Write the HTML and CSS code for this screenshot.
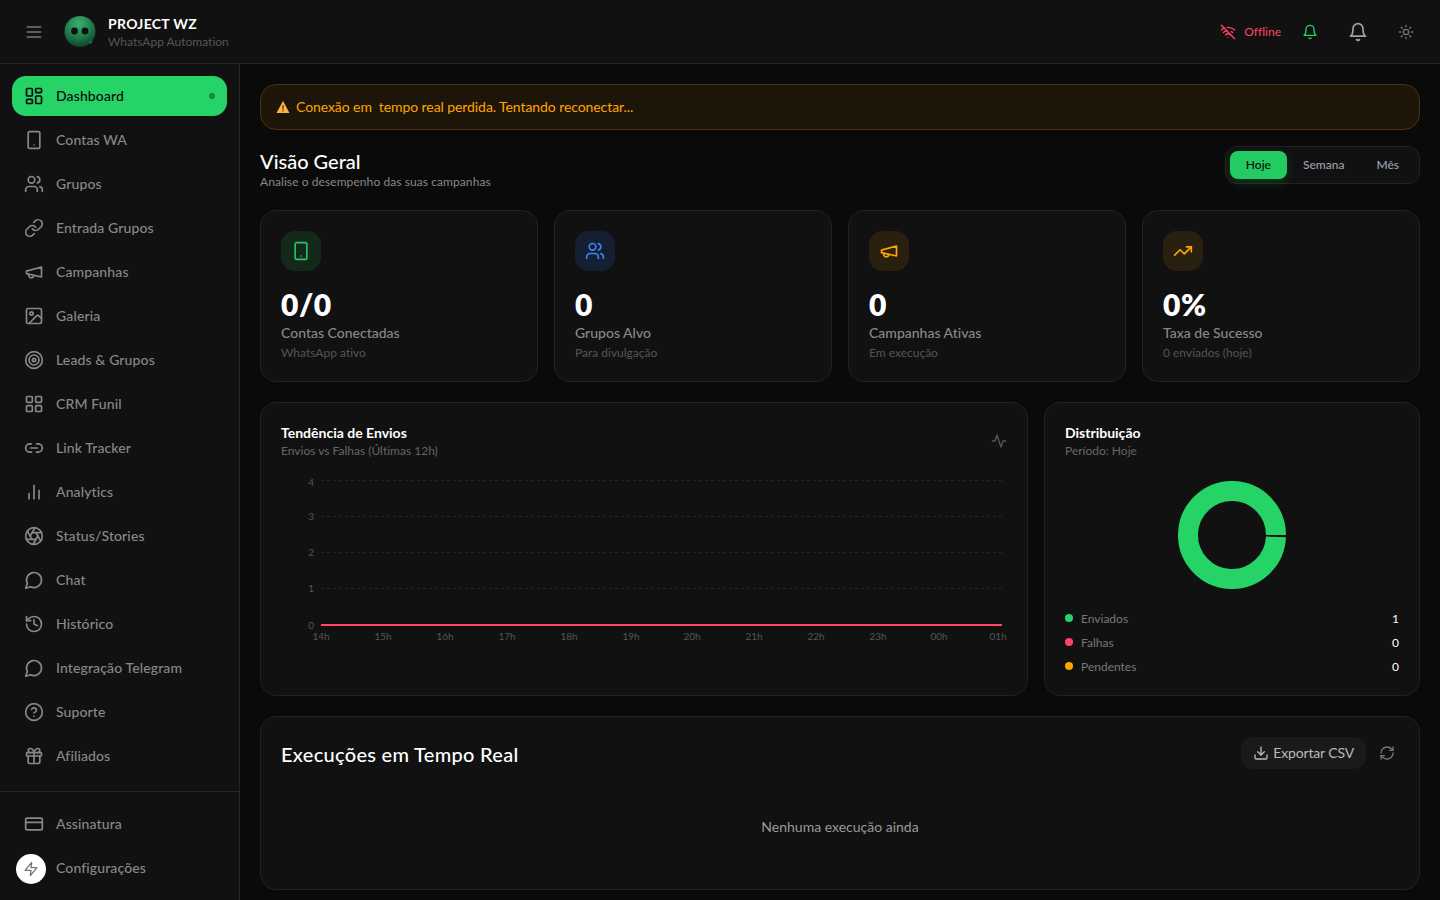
FILE: index.html
```html
<!DOCTYPE html>
<html lang="pt-BR">
<head>
  <meta charset="UTF-8" />
  <meta name="viewport" content="width=device-width, initial-scale=1.0"/>
  <title>Project WZ - Dashboard</title>
  <link rel="stylesheet" href="styles.css">
</head>
<body>

<svg class="sprite" xmlns="http://www.w3.org/2000/svg">
  <symbol id="i-menu" viewBox="0 0 24 24"><path d="M4 6h16M4 12h16M4 18h16"/></symbol>
  <symbol id="i-dashboard" viewBox="0 0 24 24"><rect x="3" y="3" width="7" height="9" rx="1"/><rect x="14" y="3" width="7" height="5" rx="1"/><rect x="14" y="12" width="7" height="9" rx="1"/><rect x="3" y="16" width="7" height="5" rx="1"/></symbol>
  <symbol id="i-phone" viewBox="0 0 24 24"><rect x="5" y="2" width="14" height="20" rx="2"/><path d="M12 18h.01"/></symbol>
  <symbol id="i-users" viewBox="0 0 24 24"><path d="M16 21v-2a4 4 0 0 0-4-4H6a4 4 0 0 0-4 4v2"/><circle cx="9" cy="7" r="4"/><path d="M22 21v-2a4 4 0 0 0-3-3.87"/><path d="M16 3.13a4 4 0 0 1 0 7.75"/></symbol>
  <symbol id="i-link" viewBox="0 0 24 24"><path d="M10 13a5 5 0 0 0 7.54.54l3-3a5 5 0 0 0-7.07-7.07l-1.72 1.71"/><path d="M14 11a5 5 0 0 0-7.54-.54l-3 3a5 5 0 0 0 7.07 7.07l1.71-1.71"/></symbol>
  <symbol id="i-megaphone" viewBox="0 0 24 24"><path d="m3 11 18-5v12L3 14v-3z"/><path d="M11.6 16.8a3 3 0 1 1-5.8-1.6"/></symbol>
  <symbol id="i-image" viewBox="0 0 24 24"><rect x="3" y="3" width="18" height="18" rx="2"/><circle cx="9" cy="9" r="2"/><path d="m21 15-3.086-3.086a2 2 0 0 0-2.828 0L6 21"/></symbol>
  <symbol id="i-target" viewBox="0 0 24 24"><circle cx="12" cy="12" r="10"/><circle cx="12" cy="12" r="6"/><circle cx="12" cy="12" r="2"/></symbol>
  <symbol id="i-grid" viewBox="0 0 24 24"><rect x="3" y="3" width="7" height="7" rx="1"/><rect x="14" y="3" width="7" height="7" rx="1"/><rect x="14" y="14" width="7" height="7" rx="1"/><rect x="3" y="14" width="7" height="7" rx="1"/></symbol>
  <symbol id="i-link2" viewBox="0 0 24 24"><path d="M9 17H7A5 5 0 0 1 7 7h2"/><path d="M15 7h2a5 5 0 1 1 0 10h-2"/><path d="M8 12h8"/></symbol>
  <symbol id="i-bars" viewBox="0 0 24 24"><path d="M18 20V10M12 20V4M6 20v-6"/></symbol>
  <symbol id="i-aperture" viewBox="0 0 24 24"><circle cx="12" cy="12" r="10"/><path d="m14.31 8 5.74 9.94"/><path d="M9.69 8h11.48"/><path d="m7.38 12 5.74-9.94"/><path d="M9.69 16 3.95 6.06"/><path d="M14.31 16H2.83"/><path d="m16.62 12-5.74 9.94"/></symbol>
  <symbol id="i-message" viewBox="0 0 24 24"><path d="M7.9 20A9 9 0 1 0 4 16.1L2 22Z"/></symbol>
  <symbol id="i-history" viewBox="0 0 24 24"><path d="M3 12a9 9 0 1 0 9-9 9.75 9.75 0 0 0-6.74 2.74L3 8"/><path d="M3 3v5h5"/><path d="M12 7v5l4 2"/></symbol>
  <symbol id="i-help" viewBox="0 0 24 24"><circle cx="12" cy="12" r="10"/><path d="M9.09 9a3 3 0 0 1 5.83 1c0 2-3 3-3 3"/><path d="M12 17h.01"/></symbol>
  <symbol id="i-gift" viewBox="0 0 24 24"><rect x="3" y="8" width="18" height="4" rx="1"/><path d="M12 8v13"/><path d="M19 12v7a2 2 0 0 1-2 2H7a2 2 0 0 1-2-2v-7"/><path d="M7.5 8a2.5 2.5 0 0 1 0-5A4.8 8 0 0 1 12 8a4.8 8 0 0 1 4.5-5 2.5 2.5 0 0 1 0 5"/></symbol>
  <symbol id="i-card" viewBox="0 0 24 24"><rect x="2" y="5" width="20" height="14" rx="2"/><path d="M2 10h20"/></symbol>
  <symbol id="i-zap" viewBox="0 0 24 24"><path d="M13 2 3 14h9l-1 8 10-12h-9l1-8z"/></symbol>
  <symbol id="i-wifi-off" viewBox="0 0 24 24"><path d="M12 20h.01"/><path d="M8.5 16.429a5 5 0 0 1 7 0"/><path d="M5 12.859a10 10 0 0 1 5.17-2.69"/><path d="M19 12.859a10 10 0 0 0-2.007-1.523"/><path d="M2 8.82a15 15 0 0 1 4.177-2.643"/><path d="M22 8.82a15 15 0 0 0-11.288-3.764"/><path d="m2 2 20 20"/></symbol>
  <symbol id="i-bell" viewBox="0 0 24 24"><path d="M6 8a6 6 0 0 1 12 0c0 7 3 9 3 9H3s3-2 3-9"/><path d="M10.3 21a1.94 1.94 0 0 0 3.4 0"/></symbol>
  <symbol id="i-sun" viewBox="0 0 24 24"><circle cx="12" cy="12" r="4"/><path d="M12 2v2M12 20v2M4.93 4.93l1.41 1.41M17.66 17.66l1.41 1.41M2 12h2M20 12h2M6.34 17.66l-1.41 1.41M19.07 4.93l-1.41 1.41"/></symbol>
  <symbol id="i-trending" viewBox="0 0 24 24"><path d="M22 7l-8.5 8.5-5-5L2 17"/><path d="M16 7h6v6"/></symbol>
  <symbol id="i-activity" viewBox="0 0 24 24"><path d="M22 12h-4l-3 9L9 3l-3 9H2"/></symbol>
  <symbol id="i-download" viewBox="0 0 24 24"><path d="M21 15v4a2 2 0 0 1-2 2H5a2 2 0 0 1-2-2v-4"/><path d="m7 10 5 5 5-5"/><path d="M12 15V3"/></symbol>
  <symbol id="i-refresh" viewBox="0 0 24 24"><path d="M3 12a9 9 0 0 1 9-9 9.75 9.75 0 0 1 6.74 2.74L21 8"/><path d="M21 3v5h-5"/><path d="M21 12a9 9 0 0 1-9 9 9.75 9.75 0 0 1-6.74-2.74L3 16"/><path d="M8 16H3v5"/></symbol>
</svg>

<header class="topbar">
  <div class="brand">
    <svg class="icon menu-icon"><use href="#i-menu"/></svg>
    <svg class="logo" viewBox="0 0 32 32">
      <defs>
        <radialGradient id="logoFill" cx="45%" cy="25%" r="80%">
          <stop offset="0" stop-color="#3fae74"/>
          <stop offset="0.55" stop-color="#1f7a4c"/>
          <stop offset="1" stop-color="#0e3d27"/>
        </radialGradient>
      </defs>
      <circle cx="16" cy="15.5" r="15.5" fill="url(#logoFill)"/>
      <path d="M24 26l4.500-1.500-1 3.500z" fill="#1c6d45"/>
      <circle cx="10.500" cy="15" r="3.400" fill="#0b1410"/>
      <circle cx="21" cy="15" r="3.400" fill="#0b1410"/>
    </svg>
    <div class="brand-text">
      <strong>PROJECT WZ</strong>
      <span>WhatsApp Automation</span>
    </div>
  </div>
  <div class="top-actions">
    <div class="conn-status">
      <svg class="icon icon-16"><use href="#i-wifi-off"/></svg>
      <span>Offline</span>
    </div>
    <svg class="icon icon-16 bell-green"><use href="#i-bell"/></svg>
    <svg class="icon bell-grey"><use href="#i-bell"/></svg>
    <svg class="icon icon-16 sun"><use href="#i-sun"/></svg>
  </div>
</header>

<div class="layout">
  <aside class="sidebar">
    <nav class="nav-main">
      <a class="nav-item active" href="#"><svg class="icon"><use href="#i-dashboard"/></svg>Dashboard<span class="active-dot"></span></a>
      <a class="nav-item" href="#"><svg class="icon"><use href="#i-phone"/></svg>Contas WA</a>
      <a class="nav-item" href="#"><svg class="icon"><use href="#i-users"/></svg>Grupos</a>
      <a class="nav-item" href="#"><svg class="icon"><use href="#i-link"/></svg>Entrada Grupos</a>
      <a class="nav-item" href="#"><svg class="icon"><use href="#i-megaphone"/></svg>Campanhas</a>
      <a class="nav-item" href="#"><svg class="icon"><use href="#i-image"/></svg>Galeria</a>
      <a class="nav-item" href="#"><svg class="icon"><use href="#i-target"/></svg>Leads &amp; Grupos</a>
      <a class="nav-item" href="#"><svg class="icon"><use href="#i-grid"/></svg>CRM Funil</a>
      <a class="nav-item" href="#"><svg class="icon"><use href="#i-link2"/></svg>Link Tracker</a>
      <a class="nav-item" href="#"><svg class="icon"><use href="#i-bars"/></svg>Analytics</a>
      <a class="nav-item" href="#"><svg class="icon"><use href="#i-aperture"/></svg>Status/Stories</a>
      <a class="nav-item" href="#"><svg class="icon"><use href="#i-message"/></svg>Chat</a>
      <a class="nav-item" href="#"><svg class="icon"><use href="#i-history"/></svg>Histórico</a>
      <a class="nav-item" href="#"><svg class="icon"><use href="#i-message"/></svg>Integração Telegram</a>
      <a class="nav-item" href="#"><svg class="icon"><use href="#i-help"/></svg>Suporte</a>
      <a class="nav-item" href="#"><svg class="icon"><use href="#i-gift"/></svg>Afiliados</a>
    </nav>
    <nav class="nav-bottom">
      <a class="nav-item" href="#"><svg class="icon"><use href="#i-card"/></svg>Assinatura</a>
      <a class="nav-item" href="#"><span class="icon"></span>Configurações</a>
    </nav>
  </aside>

  <main class="content">
    <div class="alert">
      <svg class="alert-icon" viewBox="0 0 14 14">
        <path d="M7 1 13.500 13H.5z" fill="#ffb347"/>
        <path d="M6.400 5h1.200v4.500H6.400zM6.400 10.300h1.200v1.200H6.400z" fill="#4a2f08"/>
      </svg>
      <span>Conexão em&nbsp; tempo real perdida. Tentando reconectar...</span>
    </div>

    <div class="section-head">
      <div>
        <h2>Visão Geral</h2>
        <p>Analise o desempenho das suas campanhas</p>
      </div>
      <div class="period">
        <button class="selected">Hoje</button>
        <button>Semana</button>
        <button>Mês</button>
      </div>
    </div>

    <section class="stats">
      <div class="panel stat">
        <div class="stat-icon green"><svg class="icon"><use href="#i-phone"/></svg></div>
        <div class="stat-value">0/0</div>
        <div class="stat-label">Contas Conectadas</div>
        <div class="stat-note">WhatsApp ativo</div>
      </div>
      <div class="panel stat">
        <div class="stat-icon blue"><svg class="icon"><use href="#i-users"/></svg></div>
        <div class="stat-value">0</div>
        <div class="stat-label">Grupos Alvo</div>
        <div class="stat-note">Para divulgação</div>
      </div>
      <div class="panel stat">
        <div class="stat-icon amber"><svg class="icon"><use href="#i-megaphone"/></svg></div>
        <div class="stat-value">0</div>
        <div class="stat-label">Campanhas Ativas</div>
        <div class="stat-note">Em execução</div>
      </div>
      <div class="panel stat">
        <div class="stat-icon amber"><svg class="icon"><use href="#i-trending"/></svg></div>
        <div class="stat-value">0%</div>
        <div class="stat-label">Taxa de Sucesso</div>
        <div class="stat-note">0 enviados (hoje)</div>
      </div>
    </section>

    <section class="charts">
      <div class="panel chart-card">
        <div class="chart-head">
          <div>
            <h3>Tendência de Envios</h3>
            <p>Envios vs Falhas (Últimas 12h)</p>
          </div>
          <svg class="icon icon-16 activity"><use href="#i-activity"/></svg>
        </div>
        <svg class="trend" viewBox="0 0 726 170" width="726" height="170">
          <g class="grid-lines">
            <path d="M40 .5H721M40 36.500H721M40 72.500H721M40 108.500H721"/>
          </g>
          <g class="axis-y">
            <text x="33" y="6">4</text>
            <text x="33" y="40">3</text>
            <text x="33" y="76">2</text>
            <text x="33" y="112">1</text>
            <text x="33" y="149">0</text>
          </g>
          <path class="line-fail" d="M40 145H721"/>
          <g class="axis-x">
            <text x="40" y="160">14h</text>
            <text x="102" y="160">15h</text>
            <text x="164" y="160">16h</text>
            <text x="226" y="160">17h</text>
            <text x="288" y="160">18h</text>
            <text x="350" y="160">19h</text>
            <text x="411" y="160">20h</text>
            <text x="473" y="160">21h</text>
            <text x="535" y="160">22h</text>
            <text x="597" y="160">23h</text>
            <text x="658" y="160">00h</text>
            <text x="717" y="160">01h</text>
          </g>
        </svg>
      </div>

      <div class="panel chart-card">
        <h3>Distribuição</h3>
        <p>Período: Hoje</p>
        <div class="donut-wrap">
          <svg class="donut" viewBox="0 0 108 108" width="108" height="108">
            <circle class="donut-ring" cx="54" cy="54" r="44" pathLength="360"/>
          </svg>
        </div>
        <ul class="legend">
          <li><span class="dot dot-green"></span>Enviados<b>1</b></li>
          <li><span class="dot dot-red"></span>Falhas<b>0</b></li>
          <li><span class="dot dot-amber"></span>Pendentes<b>0</b></li>
        </ul>
      </div>
    </section>

    <section class="panel runs">
      <div class="runs-head">
        <h2>Execuções em Tempo Real</h2>
        <div class="runs-actions">
          <button class="export"><svg class="icon icon-16"><use href="#i-download"/></svg><span>Exportar CSV</span></button>
          <svg class="icon icon-16 refresh"><use href="#i-refresh"/></svg>
        </div>
      </div>
      <p class="empty">Nenhuma execução ainda</p>
    </section>
  </main>
</div>

<div class="fab"><svg class="icon icon-16"><use href="#i-zap"/></svg></div>

</body>
</html>
```

FILE: styles.css
```css
* {
  box-sizing: border-box;
}
body {
  font-family: 'Lato', sans-serif;
  text-rendering: optimizeSpeed;
  margin: 0;
  height: 100vh;
  overflow: hidden;
  background: #0a0a0a;
  color: #fff;
}
h2, h3, p, ul {
  margin: 0;
  padding: 0;
}
.sprite {
  display: none;
}
.icon {
  width: 20px;
  height: 20px;
  flex: none;
  fill: none;
  stroke: currentColor;
  stroke-width: 2;
  stroke-linecap: round;
  stroke-linejoin: round;
}
.icon-16 {
  width: 16px;
  height: 16px;
}

/* top bar */
.topbar {
  height: 64px;
  background: #111;
  border-bottom: 1px solid #262626;
  display: flex;
  align-items: center;
  justify-content: space-between;
  padding: 0 26px 0 24px;
}
.brand {
  display: flex;
  align-items: center;
}
.menu-icon {
  color: #777;
  margin-right: 20px;
}
.logo {
  width: 32px;
  height: 32px;
  margin-right: 12px;
}
.brand-text {
  padding-top: 2px;
}
.brand-text strong {
  display: block;
  font-size: 14px;
  line-height: 18px;
  font-weight: 700;
  letter-spacing: .3px;
}
.brand-text span {
  display: block;
  font-size: 12px;
  line-height: 18px;
  color: #555;
}
.top-actions {
  display: flex;
  align-items: center;
}
.conn-status {
  display: flex;
  align-items: center;
  gap: 8px;
  font-size: 12px;
  color: #ff4466;
}
.bell-green {
  color: #25d366;
  margin-left: 21px;
}
.bell-grey {
  color: #9ca3af;
  margin-left: 30px;
}
.sun {
  color: #777;
  margin-left: 30px;
}

/* sidebar */
.layout {
  display: flex;
  height: 836px;
}
.sidebar {
  width: 240px;
  flex: none;
  background: #111;
  border-right: 1px solid #262626;
  display: flex;
  flex-direction: column;
  justify-content: space-between;
}
.nav-main, .nav-bottom {
  display: flex;
  flex-direction: column;
  gap: 4px;
  padding: 12px;
}
.nav-bottom {
  border-top: 1px solid #262626;
}
.nav-item {
  height: 40px;
  display: flex;
  align-items: center;
  gap: 12px;
  padding: 0 12px;
  border-radius: 14px;
  color: #888;
  font-size: 14px;
  font-weight: 500;
  line-height: 18px;
  letter-spacing: .12px;
  text-decoration: none;
}
.nav-item.active {
  background: #25d366;
  color: #0a0a0a;
}
.active-dot {
  width: 6px;
  height: 6px;
  border-radius: 50%;
  background: #128a44;
  margin-left: auto;
}
.fab {
  position: fixed;
  left: 16px;
  top: 854px;
  width: 30px;
  height: 30px;
  border-radius: 50%;
  background: #fff;
  color: #777;
  display: flex;
  align-items: center;
  justify-content: center;
}

/* main */
.content {
  flex: 1;
  padding: 20px;
  min-width: 0;
}
.panel {
  background: #111;
  border: 1px solid #222;
  border-radius: 16px;
}
.alert {
  height: 46px;
  display: flex;
  align-items: center;
  gap: 6px;
  padding: 0 15px;
  background: #1e1509;
  border: 1px solid #4a3410;
  border-radius: 16px;
  color: #ffa500;
  font-size: 14px;
  letter-spacing: -.08px;
}
.alert span {
  padding-bottom: 2px;
}
.alert-icon {
  width: 14px;
  height: 14px;
}
.section-head {
  display: flex;
  justify-content: space-between;
  align-items: flex-start;
  margin: 16px 0 20px;
  height: 44px;
}
.section-head h2 {
  font-size: 20px;
  line-height: 30px;
  font-weight: 500;
}
.section-head p {
  font-size: 12px;
  line-height: 12px;
  letter-spacing: .08px;
  color: #888;
}
.period {
  display: flex;
  padding: 4px;
  background: #111;
  border: 1px solid #222;
  border-radius: 12px;
}
.period button {
  height: 28px;
  padding: 0 16px 2px;
  border: none;
  border-radius: 8px;
  background: none;
  color: #9ca3af;
  font: 500 12px 'Lato', sans-serif;
}
.period .selected {
  background: #22cc62;
  color: #0a0a0a;
  box-shadow: 0 4px 12px rgba(34, 204, 98, 0.2);
}

/* stat cards */
.stats {
  display: grid;
  grid-template-columns: repeat(4, 1fr);
  gap: 16px;
  margin-bottom: 20px;
}
.stat {
  height: 172px;
  padding: 20px;
}
.stat-icon {
  width: 40px;
  height: 40px;
  border-radius: 14px;
  display: flex;
  align-items: center;
  justify-content: center;
  margin-bottom: 15px;
}
.green { background: #14291b; color: #22c55e; }
.blue { background: #151f33; color: #3b82f6; }
.amber { background: #2a2010; color: #ffa500; }
.stat-value {
  font-size: 30px;
  line-height: 37px;
  font-weight: 800;
  letter-spacing: .5px;
}
.stat-label {
  font-size: 14px;
  line-height: 20px;
  font-weight: 500;
  color: #888;
}
.stat-note {
  font-size: 12px;
  line-height: 20px;
  color: #555;
}

/* charts */
.charts {
  display: grid;
  grid-template-columns: 1fr 376px;
  gap: 16px;
  margin-bottom: 20px;
}
.chart-card {
  height: 294px;
  padding: 20px;
}
.chart-card h3 {
  font-size: 14px;
  line-height: 20px;
  font-weight: 700;
}
.chart-card p {
  font-size: 12px;
  line-height: 16px;
  color: #666;
}
.chart-head {
  display: flex;
  justify-content: space-between;
  align-items: center;
  margin-bottom: 21px;
}
.activity {
  color: #555;
}
.trend {
  display: block;
  overflow: visible;
}
.grid-lines path {
  stroke: #242424;
  stroke-dasharray: 3 3;
  fill: none;
}
.trend text {
  font-size: 10px;
  fill: #555;
}
.axis-y text {
  text-anchor: end;
}
.axis-x text {
  text-anchor: middle;
}
.line-fail {
  stroke: #ff4466;
  stroke-width: 2;
  fill: none;
}

.donut-wrap {
  display: flex;
  justify-content: center;
  margin: 22px 0 17px;
}
.donut {
  display: block;
}
.donut-ring {
  fill: none;
  stroke: #25d366;
  stroke-width: 20;
  stroke-dasharray: 357.500 2.500;
  transform: rotate(2.500deg);
  transform-origin: 54px 54px;
}
.legend {
  list-style: none;
}
.legend li {
  height: 24px;
  display: flex;
  align-items: center;
  font-size: 12px;
  color: #777;
}
.legend b {
  margin-left: auto;
  font-weight: 400;
  color: #fff;
}
.dot {
  width: 8px;
  height: 8px;
  border-radius: 50%;
  margin-right: 8px;
}
.dot-green { background: #25d366; }
.dot-red { background: #ff4466; }
.dot-amber { background: #ffa500; }

/* realtime */
.runs {
  height: 174px;
  padding: 20px;
}
.runs-head {
  display: flex;
  justify-content: space-between;
  align-items: center;
  height: 32px;
}
.runs-head h2 {
  font-size: 20px;
  font-weight: 500;
  letter-spacing: .3px;
  padding-top: 2px;
}
.runs-actions {
  display: flex;
  align-items: center;
  gap: 13px;
  padding-right: 4px;
}
.export {
  height: 32px;
  display: flex;
  align-items: center;
  gap: 4px;
  padding: 0 12px;
  border: none;
  border-radius: 12px;
  background: #1a1a1a;
  color: #bbb;
  font: 400 14px 'Lato', sans-serif;
  letter-spacing: -.15px;
}
.export span {
  padding-bottom: 2px;
}
.refresh {
  color: #777;
}
.empty {
  margin-top: 48px;
  text-align: center;
  font-size: 14px;
  line-height: 20px;
  color: #999;
}
```
